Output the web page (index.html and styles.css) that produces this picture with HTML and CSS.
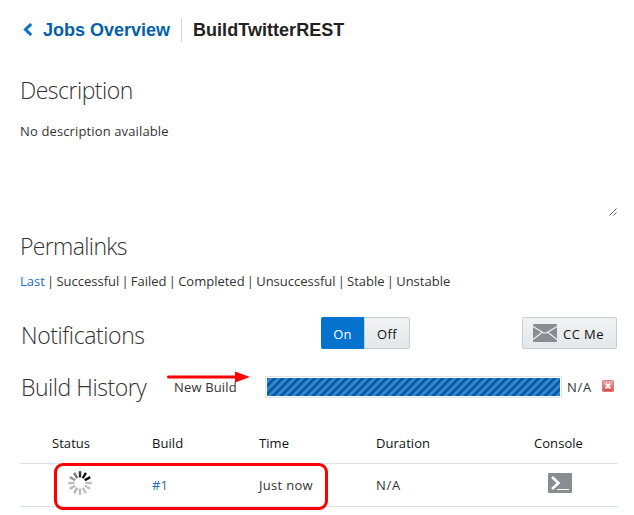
FILE: index.html
```
<!DOCTYPE html>
<html lang="en">
<head>
<meta charset="utf-8">
<title>BuildTwitterREST</title>
<link rel="stylesheet" href="styles.css">
</head>
<body>
<main class="page">
  <header class="crumbs">
    <a class="back" href="#"><svg class="chevron" width="10" height="13" viewBox="0 0 10 13"><path d="M8.200 1 2.500 6.500l5.700 5.500" fill="none" stroke="#0572ce" stroke-width="3"/></svg><span class="back-text">Jobs Overview</span></a>
    <h1 class="job">BuildTwitterREST</h1>
  </header>

  <section class="description">
    <h2 class="h-desc">Description</h2>
    <div class="desc-box">
      <span class="desc-text">No description available</span>
      <svg class="grip" width="8" height="8" viewBox="0 0 8 8"><path d="M.5 7.5l7-7M4.500 7.500l3-3" stroke="#555" stroke-width=".9"/></svg>
    </div>
  </section>

  <section class="permalinks">
    <h2 class="h-perm">Permalinks</h2>
    <p class="links"><a href="#">Last</a> | Successful | Failed | Completed | Unsuccessful | Stable | Unstable</p>
  </section>

  <section class="notifications">
    <h2 class="h-notif">Notifications</h2>
    <div class="toggle"><button class="on">On</button><button class="off">Off</button></div>
    <button class="cc"><svg width="24" height="18" viewBox="0 0 24 18"><rect width="24" height="18" rx="1" fill="#878d91"/><path d="M0 2.500l9.500 5.700q2.500 1.600 5 0L24 2.500M0 15.500l9-7M24 15.500l-9-7" fill="none" stroke="#eef0f1" stroke-width="1.100"/></svg><span>CC Me</span></button>
  </section>

  <section class="history">
    <h2 class="h-hist">Build History</h2>
    <span class="new-build">New Build</span>
    <div class="progress"><svg width="293" height="18"><defs><pattern id="stripes" width="8" height="8" patternUnits="userSpaceOnUse"><rect width="8" height="8" fill="#2f86d3"/><path d="M-2 2l4-4M-2 10L10-2M6 10l4-4" stroke="#075699" stroke-width="2.600"/></pattern></defs><rect width="293" height="18" fill="url(#stripes)"/></svg></div>
    <span class="na">N/A</span>
    <svg class="stop" width="12" height="12" viewBox="0 0 12 12"><defs><linearGradient id="red" x2="0" y2="1"><stop stop-color="#efb4b4"/><stop offset="1" stop-color="#d94747"/></linearGradient></defs><rect x=".5" y=".5" width="11" height="11" rx=".7" fill="url(#red)" stroke="#db7b7b"/><path d="M3.700 3.700l4.600 4.600M8.300 3.700L3.700 8.300" stroke="#fff" stroke-width="1.900"/></svg>
    <svg class="arrow" width="84" height="12" viewBox="0 0 84 12"><path d="M1.500 6H70" stroke="#f00" stroke-width="3" stroke-linecap="round"/><path d="M68 .5 83 6 68 11.500z" fill="#f00"/></svg>
  </section>

  <table class="builds">
    <thead><tr><th class="c1">Status</th><th class="c2">Build</th><th class="c3">Time</th><th class="c4">Duration</th><th class="c5">Console</th></tr></thead>
    <tbody><tr>
      <td class="spin"><svg width="24" height="24" viewBox="-12 -12 24 24"><g stroke-width="2.400"><path d="M0-5.500v-6.300" stroke="#333"/><path d="M0-5.500v-6.300" stroke="#111" transform="rotate(30)"/><path d="M0-5.500v-6.300" stroke="#000" transform="rotate(60)"/><path d="M0-5.500v-6.300" stroke="#bbb" transform="rotate(90)"/><path d="M0-5.500v-6.300" stroke="#c4c4c4" transform="rotate(120)"/><path d="M0-5.500v-6.300" stroke="#c0c0c0" transform="rotate(150)"/><path d="M0-5.500v-6.300" stroke="#bbb" transform="rotate(180)"/><path d="M0-5.500v-6.300" stroke="#b4b4b4" transform="rotate(210)"/><path d="M0-5.500v-6.300" stroke="#b8b8b8" transform="rotate(240)"/><path d="M0-5.500v-6.300" stroke="#bbb" transform="rotate(270)"/><path d="M0-5.500v-6.300" stroke="#999" transform="rotate(300)"/><path d="M0-5.500v-6.300" stroke="#777" transform="rotate(330)"/></g></svg></td>
      <td><a href="#">#1</a></td>
      <td class="just">Just now</td>
      <td class="dur">N/A</td>
      <td class="term"><svg width="24" height="20" viewBox="0 0 24 20"><rect width="24" height="20" rx=".7" fill="#878d91"/><path d="M4 4l6.500 6L4 16" fill="none" stroke="#fff" stroke-width="2.600"/><path d="M9 16.500h12" stroke="#fff"/></svg></td>
    </tr></tbody>
  </table>
  <div class="callout"></div>
</main>
</body>
</html>
```
FILE: styles.css
```
* { box-sizing: border-box; }
body { margin: 0; background: #fff; color: #333; font: 13px/20px "Open Sans", "Noto Sans", sans-serif; }
.page { position: relative; width: 634px; height: 515px; overflow: hidden; padding: 0 16px 0 20px; }
h1, h2, p { margin: 0; }
a { color: #1f6fb5; text-decoration: none; }
button { margin: 0; padding: 0; font: inherit; }
svg { display: block; flex: none; }

.crumbs { display: flex; align-items: center; height: 42px; margin-top: 9px; font-family: "Liberation Sans", Arial, sans-serif; font-weight: bold; }
.back { display: flex; align-items: center; height: 24px; width: 162px; padding-left: 3px; border-right: 1px solid #d3dade; color: #045fab; font-size: 18px; }
.chevron { margin: -2px 10px 0 0; }
.job { margin-left: 11px; font-size: 18px; line-height: 24px; letter-spacing: .04px; color: #222; }

h2 { font-size: 23px; line-height: 34px; font-weight: 300; color: #333; white-space: nowrap; }
.h-desc { letter-spacing: -.5px; }
.h-perm { letter-spacing: -.65px; }
.description { height: 164px; padding-top: 22px; }
.desc-box { display: flex; flex-direction: column; justify-content: space-between; height: 95px; margin-top: 14px; }
.desc-text { letter-spacing: .13px; }
.grip { align-self: flex-end; margin-right: 1px; }
.permalinks { height: 96px; padding-top: 14px; }
.links { margin-top: 8px; white-space: nowrap; word-spacing: -1.17px; }
.notifications { display: flex; height: 42px; margin-top: 1px; padding-left: 1px; }
.h-notif { width: 300px; margin-top: 6px; letter-spacing: -.4px; }
.toggle { display: flex; width: 89px; height: 32px; margin-top: 5px; }
.on { width: 43px; padding-top: 2px; border: 0; border-radius: 2px 0 0 2px; background: #0572ce; color: #fff; letter-spacing: .3px; }
.off { width: 46px; padding-top: 2px; border: 1px solid #c4ced7; border-radius: 0 2px 2px 0; letter-spacing: .3px; }
.off, .cc { background: linear-gradient(#f1f3f3, #e3e7ea); color: #111; }
.cc { display: flex; align-items: center; gap: 6px; width: 95px; height: 32px; margin: 5px 0 0 112px; padding-left: 10px; border: 1px solid #c4ced7; border-radius: 2px; letter-spacing: .45px; }
.cc span { padding-top: 2px; }
.history { position: relative; display: flex; align-items: center; height: 54px; margin-top: 6px; padding-left: 1px; }
.h-hist { width: 153px; letter-spacing: -.45px; }
.new-build { width: 91px; letter-spacing: .15px; }
.progress { width: 297px; height: 22px; padding: 1px; border: 1px solid #dfe4e7; }
.na { width: 40px; padding-left: 5px; letter-spacing: .7px; }
.stop { margin-top: -2px; }
.arrow { position: absolute; left: 147px; top: 11px; }

.builds { width: 598px; margin-top: 7px; table-layout: fixed; border-collapse: collapse; }
.builds th, .builds td { padding: 0; border-bottom: 1px solid #dce3e7; }
.builds th { height: 42px; padding-top: 2px; font-weight: 400; color: #111; text-align: left; letter-spacing: .05px; }
.builds td { height: 43px; padding-top: 1px; }
.builds th.c1 { width: 132px; padding-left: 32px; }
.c2 { width: 107px; }
.c3 { width: 117px; }
.c4 { width: 158px; }
.just { letter-spacing: .3px; }
.dur { letter-spacing: .7px; }
.builds .spin { padding: 0 0 3px 48px; }
.builds .term { padding: 0 0 3px 14px; }
.callout { position: absolute; left: 54px; top: 463px; width: 274px; height: 47px; border: 3px solid #f00; border-radius: 9px; }
```
